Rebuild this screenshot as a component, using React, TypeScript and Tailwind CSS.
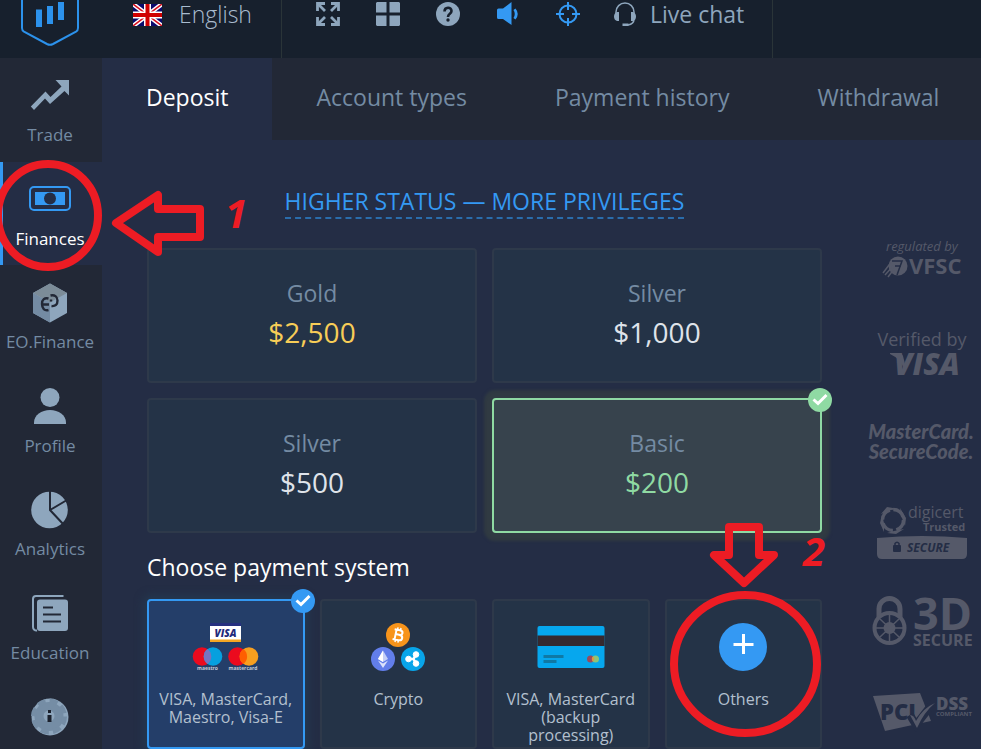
import type { ReactNode } from 'react';
import clsx from 'clsx';

const TradeIcon = () => (
  <svg viewBox="0 0 40 40" className="w-10 h-10" fill="#8ea6bd">
    <path d="M39 4v15.500l-4.500-4.500L20 28l-5-5.500L4 34 0.800 30.500 15.500 15.500l5 5.500L31.500 10.500l-5-5.500-1-1z" />
  </svg>
);

const FinancesIcon = () => (
  <svg viewBox="0 0 42 40" className="w-[42px] h-10">
    <rect x="1" y="7" width="40" height="23" rx="4" fill="none" stroke="#3499f3" strokeWidth="2" />
    <rect x="6" y="12" width="30" height="13" fill="#3499f3" />
    <circle cx="21" cy="18.500" r="6" fill="#242d45" />
  </svg>
);

const EoIcon = () => (
  <svg viewBox="0 0 40 40" className="w-10 h-10">
    <path d="M20 0.500 37 10v20L20 39.500 3 30V10z" fill="#8ea6bd" />
    <path d="M20 0.500 37 10 20 19.500 3 10z" fill="#7c8c98" />
    <path d="M3 10l17 9.500v20L3 30z" fill="#748ba3" />
    <path
      d="M18.500 15.500c-4-1-6.500 1-6.500 5.500s2.500 7 6.500 6M12 21.500h7M20.500 12.500c4-1 7 1 7 5s-2 6-6 5.500M21 16.500v2"
      fill="none"
      stroke="#222836"
      strokeWidth="2.400"
    />
  </svg>
);

const ProfileIcon = () => (
  <svg viewBox="0 0 40 40" className="w-10 h-10" fill="#8ea6bd">
    <circle cx="20" cy="10.500" r="9.500" />
    <path d="M4 37v-1.500C4 28 11.500 23 20 23s16 5 16 12.500V37z" />
  </svg>
);

const AnalyticsIcon = () => (
  <svg viewBox="0 0 40 40" className="w-10 h-10">
    <circle cx="19.500" cy="20" r="18.300" fill="#8ea6bd" />
    <path d="M20 0v20l14 15M20 20l17-10" fill="none" stroke="#222836" strokeWidth="2" />
  </svg>
);

const EducationIcon = () => (
  <svg viewBox="0 0 40 40" className="w-10 h-10">
    <rect x="7" y="5.500" width="31" height="31.500" rx="3" fill="#8ea6bd" />
    <path d="M33.500 2H6a3 3 0 0 0-3 3V33a3.500 3.500 0 0 0 4 3.500" fill="none" stroke="#8ea6bd" strokeWidth="2" />
    <path d="M13 13.500h10M13 20.500h18M13 27.500h18" stroke="#222836" strokeWidth="2" />
  </svg>
);

const HelpIcon = () => (
  <svg viewBox="0 0 40 40" className="w-10 h-10">
    <circle cx="20" cy="20" r="18.500" fill="#8ea6bd" />
    <circle cx="19" cy="19.500" r="14.500" fill="#758da5" />
    <circle cx="19" cy="19.500" r="15.500" fill="none" stroke="#758da5" strokeWidth="5" strokeDasharray="8 4.200" />
    <circle cx="19" cy="19" r="5.500" fill="#8ea6bd" />
    <path d="M18 13h3v3h-3zM17.500 18h4v7h-4z" fill="#1b212d" />
  </svg>
);

const navItems = [
  { label: 'Trade', icon: <TradeIcon /> },
  { label: 'Finances', icon: <FinancesIcon />, active: true },
  { label: 'EO.Finance', icon: <EoIcon /> },
  { label: 'Profile', icon: <ProfileIcon /> },
  { label: 'Analytics', icon: <AnalyticsIcon /> },
  { label: 'Education', icon: <EducationIcon /> },
  { label: '', icon: <HelpIcon /> },
];

const tabs = ['Deposit', 'Account types', 'Payment history', 'Withdrawal'];

const amounts = [
  { name: 'Gold', value: '$2,500', color: 'text-[#f7cd57]' },
  { name: 'Silver', value: '$1,000', color: 'text-[#dfe3ea]' },
  { name: 'Silver', value: '$500', color: 'text-[#dfe3ea]' },
  { name: 'Basic', value: '$200', color: 'text-[#8fdaa3]', selected: true },
];

const CardBrands = () => (
  <svg viewBox="0 0 68 48" className="w-[68px] h-12">
    <rect x="18" y="0" width="31" height="19" fill="#fff" />
    <rect x="18" y="0" width="31" height="3" fill="#25307f" />
    <rect x="18" y="16.500" width="31" height="2.500" fill="#f5a623" />
    <text x="33.500" y="13.500" textAnchor="middle" fontSize="10" fontWeight="800" fontStyle="italic" fill="#1f2a7c">
      VISA
    </text>
    <circle cx="10" cy="33.500" r="9.300" fill="#eb0a1e" />
    <circle cx="21" cy="33.500" r="9.300" fill="#06a0df" />
    <path d="M15.500 26a9.300 9.300 0 0 1 0 15 9.300 9.300 0 0 1 0-15z" fill="#7673c0" />
    <circle cx="45.500" cy="33.500" r="9.300" fill="#eb0a1e" />
    <circle cx="57" cy="33.500" r="9.300" fill="#f79f1f" />
    <path d="M51.300 26a9.300 9.300 0 0 1 0 15 9.300 9.300 0 0 1 0-15z" fill="#ff5f00" />
    <text x="15.500" y="47" textAnchor="middle" fontSize="5" fontWeight="700" fill="#c3cbd8">
      maestro
    </text>
    <text x="51" y="47" textAnchor="middle" fontSize="5" fontWeight="700" fill="#c3cbd8">
      mastercard
    </text>
  </svg>
);

const CryptoCoins = () => (
  <svg viewBox="0 0 54 48" className="w-[54px] h-12">
    <circle cx="27" cy="12" r="12" fill="#f7941b" />
    <g transform="rotate(12 27 12)" fill="none" stroke="#fff" strokeWidth="2">
      <path d="M22.500 7h5.500c4 0 4 4.600 0 4.600h-3.500M24.500 7v10M22.500 17h6c4.300 0 4.300-5.400 0-5.400" />
      <path d="M25.500 4.500V7M28.500 4.500V7M25.500 17v2.500M28.500 17v2.500" strokeWidth="1.500" />
    </g>
    <circle cx="12" cy="36" r="12" fill="#627eea" />
    <path d="M12 27.500 17 36l-5 3-5-3z" fill="#c4cff8" />
    <path d="M12 27.500V39l-5-3z" fill="#fff" />
    <path d="M7 37.500l5 3 5-3-5 7.500z" fill="#dce2fb" />
    <circle cx="42" cy="36" r="12" fill="#08a5e9" />
    <g fill="#fff" stroke="#fff">
      <circle cx="37.500" cy="36" r="2.800" />
      <circle cx="45" cy="31.500" r="2.800" />
      <circle cx="45" cy="40.500" r="2.800" />
      <path d="M37.500 36h5M45 31.500 42.500 36l2.500 4.500" fill="none" strokeWidth="2.500" />
    </g>
  </svg>
);

const BankCard = () => (
  <svg viewBox="0 0 68 48" className="w-[68px] h-12">
    <rect x="0.500" y="3" width="67" height="42" rx="2" fill="#06a7ee" />
    <rect x="0.500" y="12.500" width="67" height="10.500" fill="#35292f" />
    <path d="M6.500 33.500h20M6.500 38.500h13" stroke="#0f79a5" strokeWidth="3" />
    <circle cx="53.500" cy="36" r="3.500" fill="#9b4a5b" />
    <circle cx="58.500" cy="36" r="3.500" fill="#8ac47b" />
    <path d="M56 33.500a3.500 3.500 0 0 1 0 5 3.500 3.500 0 0 1 0-5z" fill="#e2973b" />
  </svg>
);

const PlusCircle = () => (
  <svg viewBox="0 0 48 48" className="w-12 h-12">
    <circle cx="24" cy="24" r="24" fill="#3499f3" />
    <path d="M24.500 11v20M14.500 21.500h20" stroke="#fff" strokeWidth="3" />
  </svg>
);

const methods = [
  { label: 'VISA, MasterCard, Maestro, Visa-E', icon: <CardBrands />, selected: true },
  { label: 'Crypto', icon: <CryptoCoins /> },
  { label: 'VISA, MasterCard (backup processing)', icon: <BankCard /> },
  { label: 'Others', icon: <PlusCircle /> },
];

function CheckBadge({ className }: { className: string }) {
  return (
    <span className={clsx('absolute -top-3 -right-3 w-6 h-6 rounded-full', className)}>
      <svg viewBox="0 0 24 24" className="w-6 h-6" fill="none" stroke="#fff" strokeWidth="3">
        <path d="M5.500 11.500l4.500 4L18.500 7" />
      </svg>
    </span>
  );
}

function Header() {
  return (
    <header className="flex h-[58px] shrink-0 bg-[#17202d] text-[23px] leading-7">
      <a href="#" aria-label="Home" className="w-[102px] shrink-0">
        <svg viewBox="0 0 102 58" className="w-[102px] h-[58px]">
          <path
            d="M22 -12V28q0 2.500 2 3.700L47 44q3 1.500 6 0L76 31.700q2-1.200 2-3.700V-12"
            fill="none"
            stroke="#2c92ec"
            strokeWidth="2"
          />
          <path d="M36 9.500h6V27h-6zM47 6h6v18h-6zM58 2h6v18h-6z" fill="#2c92ec" />
        </svg>
      </a>
      <div className="w-[180px] shrink-0 border-r border-[#2a3438] pl-[31px]">
        <button className="flex items-center gap-[17px]">
          <svg viewBox="0 0 29 22" className="mt-px w-[29px] h-[22px]">
            <path fill="#0a0a6b" d="M0 0h29v22H0z" />
            <path d="M0 0l29 22M29 0L0 22" stroke="#fff" strokeWidth="4.500" />
            <path d="M0 0l29 22M29 0L0 22" stroke="#d80f1d" strokeWidth="1.500" />
            <path d="M14.500 0v22M0 11h29" stroke="#fff" strokeWidth="7" />
            <path d="M14.500 0v22M0 11h29" stroke="#d00000" strokeWidth="4" />
          </svg>
          <span className="font-light text-[#a9bccf]">English</span>
        </button>
      </div>
      <div className="w-[491px] shrink-0 border-r border-[#2a3438] pl-[34px]">
        <div className="flex items-center gap-9">
          <button aria-label="Full screen">
            <svg viewBox="0 0 24 24" className="w-6 h-6" fill="none" stroke="#8ea6bd" strokeWidth="2.800">
              <path d="M1.500 9V1.500H9M15 1.500h7.500V9M22.500 15v7.500H15M9 22.500H1.500V15" />
              <path d="M2 2l7 7M22 2l-7 7M22 22l-7-7M2 22l7-7" />
            </svg>
          </button>
          <button aria-label="Layout">
            <svg viewBox="0 0 24 24" className="w-6 h-6" fill="#8ea6bd">
              <path d="M1 0h9.500v10.500H0V1zM13.500 0H23l1 1v9.500H13.500zM0 13.500h10.500V24H1l-1-1zM13.500 13.500H24V23l-1 1h-9.500z" />
            </svg>
          </button>
          <button aria-label="Help">
            <svg viewBox="0 0 24 24" className="w-6 h-6">
              <circle cx="12" cy="12" r="12" fill="#8ea6bd" />
              <path d="M8.500 9.500c0-5 7-5 7-.500 0 3-3.500 2.500-3.500 6" fill="none" stroke="#17202d" strokeWidth="2.600" />
              <circle cx="12" cy="18" r="1.700" fill="#17202d" />
            </svg>
          </button>
          <button aria-label="Sound">
            <svg viewBox="0 0 24 24" className="w-6 h-6">
              <path d="M1 8q0-1.500 1.500-1.500H7L15.500 0v23L7 17H2.500Q1 17 1 15.500z" fill="#3499f3" />
              <path d="M17.500 8l2-1.500q4.500 5.500 0 11l-2-1.500q2.500-4 0-8z" fill="#3499f3" />
            </svg>
          </button>
          <button aria-label="Target">
            <svg viewBox="0 0 24 24" className="w-6 h-6" fill="none" stroke="#3499f3" strokeWidth="2">
              <circle cx="12" cy="12" r="8.500" />
              <path d="M12 0v8M12 16v8M0 12h8M16 12h8" />
            </svg>
          </button>
          <button className="-ml-[3px] flex items-center gap-[13px] text-[#8ea6bd]">
            <svg viewBox="0 0 24 24" className="w-6 h-6">
              <path d="M3 12V10a9 9 0 0 1 18 0v2M21 17q0 5-6 6" fill="none" stroke="#8ea6bd" strokeWidth="1.500" />
              <path d="M6 10v9H4q-3-1-3-4.500T4 10zM18 10v9h2q3-1 3-4.500T20 10zM9.500 21.500h6V24h-6z" fill="#8ea6bd" />
            </svg>
            <span>Live chat</span>
          </button>
        </div>
      </div>
    </header>
  );
}

function Sidebar() {
  return (
    <nav className="w-[102px] shrink-0 overflow-hidden bg-[#222836]">
      <ul className="flex h-[725px] flex-col">
        {navItems.map((item, i) => (
          <li key={i} className="flex-1">
            <a
              href="#"
              aria-label={item.label || 'Help'}
              className={clsx(
                'flex h-full flex-col items-center pt-[18px] pr-[2px] text-[17px] leading-6',
                item.active
                  ? 'bg-[#242d45] text-white shadow-[inset_3px_0_0_#3499f3]'
                  : 'text-[#748ba3]'
              )}
            >
              {item.icon}
              <span className="mt-[7px]">{item.label}</span>
            </a>
          </li>
        ))}
      </ul>
    </nav>
  );
}

function Seal({ label, height, children }: { label: string; height: number; children: ReactNode }) {
  return (
    <svg
      role="img"
      aria-label={label}
      viewBox={`0 0 110 ${height}`}
      width={110}
      height={height}
      fill="#555969"
      className="shrink-0"
    >
      {children}
    </svg>
  );
}

function Seals() {
  return (
    <aside className="flex w-[119px] shrink-0 flex-col items-center pt-[98px]">
      <Seal label="Regulated by VFSC" height={40}>
        <text x="19" y="13" fontSize="13" fontStyle="italic">regulated by</text>
        <circle cx="31" cy="28" r="9.500" />
        <path d="M16 35l9-12M18 37l9-10M21 39l6-8" stroke="#555969" strokeWidth="1.500" />
        <path d="M25 23h10l-5 14M28 28h6" fill="none" stroke="#242d45" strokeWidth="1.500" />
        <text x="42" y="36" fontSize="22" fontWeight="700">VFSC</text>
      </Seal>
      <div className="mt-[52px]">
        <Seal label="Verified by Visa" height={50}>
          <text x="55" y="16" textAnchor="middle" fontSize="18">Verified by</text>
          <path d="M23 23h9q3 0 4 3l2 8-1 5q-3-10-14-15z" />
          <text x="60" y="45" textAnchor="middle" fontSize="30" fontWeight="800" fontStyle="italic">VISA</text>
        </Seal>
      </div>
      <div className="mt-[38px]">
        <Seal label="MasterCard SecureCode" height={46}>
          <g fontSize="20" fontWeight="900" fontStyle="italic" textAnchor="middle" fontFamily="Lato, sans-serif">
            <text x="54" y="21">MasterCard.</text>
            <text x="54" y="41">SecureCode.</text>
          </g>
        </Seal>
      </div>
      <div className="mt-[37px]">
        <Seal label="DigiCert Trusted Secure" height={60}>
          <circle cx="26" cy="19" r="10.500" fill="none" stroke="#555969" strokeWidth="3.500" strokeDasharray="13 3.500" />
          <path d="M14 13l6-7 12 2-8 1zM33 7l6 10-1 8-3-8zM37 28l-8 5-9-1 7-2zM17 31l-4-9 2-8 2 8z" />
          <text x="41" y="17" fontSize="16">digicert</text>
          <text x="56" y="30" fontSize="11" fontWeight="700">Trusted</text>
          <path d="M10 37q45-4 90 0v16q0 5-5 5H15q-5 0-5-5z" />
          <g fill="#242d45">
            <rect x="26" y="44" width="8" height="7" rx="1" />
            <path d="M28 45v-2.500q2-2.500 4 0V45" fill="none" stroke="#242d45" strokeWidth="1.500" />
            <text x="40" y="51" fontSize="12" fontWeight="700" fontStyle="italic">SECURE</text>
          </g>
        </Seal>
      </div>
      <div className="mt-[34px]">
        <Seal label="3D Secure" height={54}>
          <path d="M12 26V14a10 10 0 0 1 21 0v12" fill="none" stroke="#555969" strokeWidth="5" />
          <circle cx="22.500" cy="33" r="15" fill="#242d45" stroke="#555969" strokeWidth="4" />
          <circle cx="22.500" cy="33" r="6" />
          <path d="M22.500 20v26M9 33h27M13 24l19 18M32 24L13 42" stroke="#555969" strokeWidth="1.500" />
          <text x="46" y="35" fontSize="45" fontWeight="700">3D</text>
          <text x="46" y="51" fontSize="16" fontWeight="700">SECURE</text>
        </Seal>
      </div>
      <div className="mt-[42px]">
        <Seal label="PCI DSS compliant" height={44}>
          <path d="M6 5l47-3 11 28-46 10z" />
          <text x="13" y="29" fontSize="22" fontWeight="800" fill="#242d45">PCI</text>
          <path d="M43 24l6 10L66 12" fill="none" stroke="#242d45" strokeWidth="8" />
          <path d="M43 24q4 0 6 6Q56 17 68 12 57 21 50 37z" />
          <text x="69" y="19" fontSize="17" fontWeight="800">DSS</text>
          <text x="69" y="25" fontSize="6" fontWeight="700">COMPLIANT</text>
        </Seal>
      </div>
    </aside>
  );
}

// hand-drawn step markers over the page
function Annotations() {
  return (
    <svg
      width="981"
      height="749"
      viewBox="0 0 981 749"
      className="pointer-events-none absolute left-0 top-0"
      fill="none"
      stroke="#ed1c24"
      strokeWidth="8"
      strokeLinejoin="round"
    >
      <ellipse cx="48" cy="215.500" rx="50" ry="51.500" />
      <path d="M116 223l42-28v14h42v28h-42v15z" />
      <ellipse cx="745.500" cy="664" rx="71.500" ry="69" />
      <path d="M729 527h30v28h15l-30 28-30-28h15z" />
      <g fill="#ed1c24" stroke="none" fontSize="40" fontWeight="700" fontStyle="italic">
        <text x="225" y="228">1</text>
        <text x="803" y="566">2</text>
      </g>
    </svg>
  );
}

export default function App() {
  return (
    <div className="relative flex h-screen flex-col overflow-hidden bg-[#242d45] font-['Open_Sans','Noto_Sans',sans-serif]">
      <Header />
      <div className="flex min-h-0 flex-1">
        <Sidebar />
        <main className="min-w-0 flex-1">
          <div role="tablist" className="flex bg-[#222836] text-[23px]">
            {tabs.map((tab, i) => (
              <button
                key={tab}
                role="tab"
                aria-selected={i === 0}
                className={clsx(
                  'h-[82px] shrink-0 whitespace-nowrap px-11 pb-1',
                  i === 0 ? 'bg-[#242d45] text-white' : 'text-[#748ba3]'
                )}
              >
                {tab}
              </button>
            ))}
          </div>
          <div className="flex gap-10 pl-[45px]">
            <div className="min-w-0 flex-1">
              <div className="flex h-[108px] items-start justify-center pt-[45px]">
                <a href="#" className="border-b-2 border-dashed border-[#2a6cab] text-[23px] leading-8 text-[#3499f3]">
                  HIGHER STATUS — MORE PRIVILEGES
                </a>
              </div>
              <div className="grid grid-cols-2 gap-[15px]">
                {amounts.map((a) => (
                  <button
                    key={a.value}
                    className={clsx(
                      'relative flex h-[135px] flex-col items-center justify-center gap-[3px] rounded-sm border-2 pb-[2px]',
                      a.selected
                        ? 'border-[#8fdaa3] bg-[#37434d] shadow-[0_0_3px_8px_#303a42]'
                        : 'border-[#2e394a] bg-[#243347]'
                    )}
                  >
                    <span className="text-[23px] leading-8 text-[#748ba3]">{a.name}</span>
                    <span className={clsx('text-[28px] leading-10', a.color)}>{a.value}</span>
                    {a.selected && <CheckBadge className="bg-[#8fdaa3]" />}
                  </button>
                ))}
              </div>
              <h2 className="mt-[18px] text-[23px] leading-8 text-white">Choose payment system</h2>
              <div className="mt-4 grid grid-cols-4 gap-[15px]">
                {methods.map((m) => (
                  <button
                    key={m.label}
                    className={clsx(
                      'relative flex h-[150px] flex-col items-center rounded-sm border-2 px-2 pt-[22px] text-base leading-[18px] text-[#b3c0cf]',
                      m.selected
                        ? 'border-[#3499f3] bg-[#243e69] shadow-[0_0_8px_4px_#24384f]'
                        : 'border-[#2e394a] bg-[#243347]'
                    )}
                  >
                    {m.icon}
                    <span className="mt-[19px]">{m.label}</span>
                    {m.selected && <CheckBadge className="bg-[#3499f3]" />}
                  </button>
                ))}
              </div>
            </div>
            <Seals />
          </div>
        </main>
      </div>
      <Annotations />
    </div>
  );
}
